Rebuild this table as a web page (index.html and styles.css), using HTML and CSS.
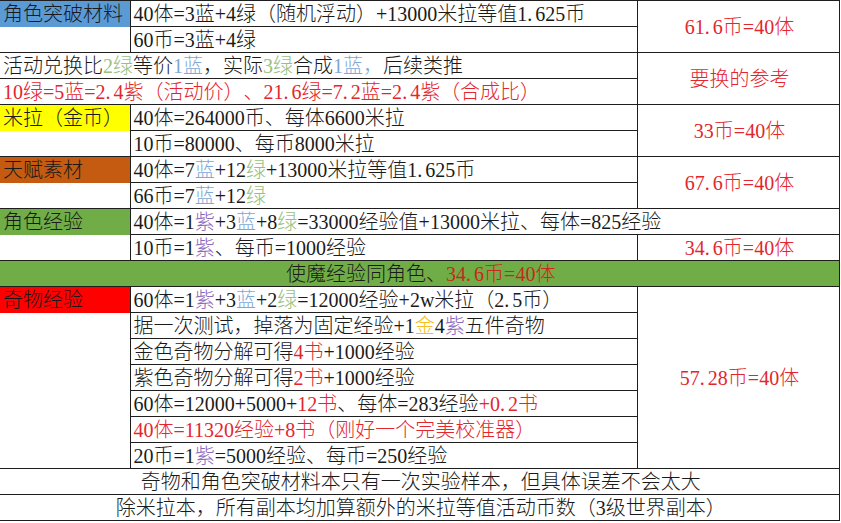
FILE: index.html
```html
<!DOCTYPE html>
<html lang="zh-CN">
<head>
<meta charset="utf-8">
<title>体力换算表</title>
<link rel="stylesheet" href="styles.css">
</head>
<body>
<table class="sheet">
  <colgroup><col class="ca"><col class="cb"><col class="cc"></colgroup>
  <tr>
    <td class="lab bg-blue">角色突破材料</td>
    <td>40体=3蓝+4绿（随机浮动）+13000米拉等值1<span class="dot">.</span>625币</td>
    <td rowspan="2" class="res">61<span class="dot">.</span>6币=40体</td>
  </tr>
  <tr>
    <td class="cont"></td>
    <td>60币=3蓝+4绿</td>
  </tr>
  <tr>
    <td colspan="2">活动兑换比<span class="g">2绿</span>等价<span class="b">1蓝</span>，实际<span class="g">3绿</span>合成<span class="b">1蓝，</span>后续类推</td>
    <td rowspan="2" class="res">要换的参考</td>
  </tr>
  <tr>
    <td colspan="2" class="red">10绿=5蓝=2<span class="dot">.</span>4紫（活动价）、21<span class="dot">.</span>6绿=7<span class="dot">.</span>2蓝=2<span class="dot">.</span>4紫（合成比）</td>
  </tr>
  <tr>
    <td class="lab bg-yellow">米拉（金币）</td>
    <td>40体=264000币、每体6600米拉</td>
    <td rowspan="2" class="res">33币=40体</td>
  </tr>
  <tr>
    <td class="cont"></td>
    <td>10币=80000、每币8000米拉</td>
  </tr>
  <tr>
    <td class="lab bg-orange">天赋素材</td>
    <td>40体=7<span class="b">蓝</span>+12<span class="g">绿</span>+13000米拉等值1<span class="dot">.</span>625币</td>
    <td rowspan="2" class="res">67<span class="dot">.</span>6币=40体</td>
  </tr>
  <tr>
    <td class="cont"></td>
    <td>66币=7<span class="b">蓝</span>+12<span class="g">绿</span></td>
  </tr>
  <tr>
    <td class="lab bg-green">角色经验</td>
    <td colspan="2">40体=1<span class="p">紫</span>+3<span class="b">蓝</span>+8<span class="g">绿</span>=33000经验值+13000米拉、每体=825经验</td>
  </tr>
  <tr>
    <td class="cont"></td>
    <td>10币=1<span class="p">紫</span>、每币=1000经验</td>
    <td class="res">34<span class="dot">.</span>6币=40体</td>
  </tr>
  <tr>
    <td colspan="3" class="band">使魔经验同角色、<span class="dred">34<span class="dot">.</span>6币=40体</span></td>
  </tr>
  <tr>
    <td class="lab bg-red">奇物经验</td>
    <td>60体=1<span class="p">紫</span>+3<span class="b">蓝</span>+2<span class="g">绿</span>=12000经验+2w米拉（2<span class="dot">.</span>5币）</td>
    <td rowspan="7" class="res">57<span class="dot">.</span>28币=40体</td>
  </tr>
  <tr>
    <td rowspan="6" class="cont"></td>
    <td>据一次测试，掉落为固定经验+1<span class="au">金</span>4<span class="p">紫</span>五件奇物</td>
  </tr>
  <tr>
    <td>金色奇物分解可得<span class="red">4书</span>+1000经验</td>
  </tr>
  <tr>
    <td>紫色奇物分解可得<span class="red">2书</span>+1000经验</td>
  </tr>
  <tr>
    <td>60体=12000+5000+<span class="red">12书</span>、每体=283经验<span class="red">+0<span class="dot">.</span>2书</span></td>
  </tr>
  <tr>
    <td class="red">40体=11320经验+8书（刚好一个完美校准器）</td>
  </tr>
  <tr>
    <td>20币=1<span class="p">紫</span>=5000经验、每币=250经验</td>
  </tr>
  <tr>
    <td colspan="3" class="center">奇物和角色突破材料本只有一次实验样本，但具体误差不会太大</td>
  </tr>
  <tr>
    <td colspan="3" class="center">除米拉本，所有副本均加算额外的米拉等值活动币数（3级世界副本）</td>
  </tr>
</table>
</body>
</html>
```
FILE: styles.css
```css
html, body {
  margin: 0;
  padding: 0;
  background: #ffffff;
}

body {
  font-family: "Liberation Serif", "Noto Sans CJK SC", serif;
  font-size: 20px;
  font-weight: 300;
  color: #1a1a1a;
  text-spacing-trim: space-all;
}

.sheet {
  border-collapse: collapse;
  table-layout: fixed;
  width: 839px;
  border-left: hidden;
}

.ca { width: 130px; }
.cb { width: 507px; }
.cc { width: 202px; }

.sheet tr {
  height: 26px;
}

.sheet td {
  border: 1px solid #1e1e1e;
  padding: 0 0 0 3px;
  height: 25px;
  line-height: 24px;
  white-space: nowrap;
  overflow: hidden;
  vertical-align: middle;
}

.lab { border-bottom: hidden; padding-left: 2px; }
.sheet td.cont { border-top: hidden; }

.dot { letter-spacing: 3px; }

.res {
  text-align: center;
  color: #e3262d;
}

.center { text-align: center; }

.band {
  text-align: center;
  background: #70ad47;
}

.bg-blue { background: #5b9bd5; }
.bg-yellow { background: #ffff00; }
.bg-orange { background: #c55a11; }
.bg-green { background: #70ad47; }
.bg-red { background: #ff0000; }

.red { color: #e3262d; }
.dred { color: #c8281c; }
.g { color: #98c180; }
.b { color: #7ea8d6; }
.p { color: #8a68bd; }
.au { color: #f5bd1f; }
```
